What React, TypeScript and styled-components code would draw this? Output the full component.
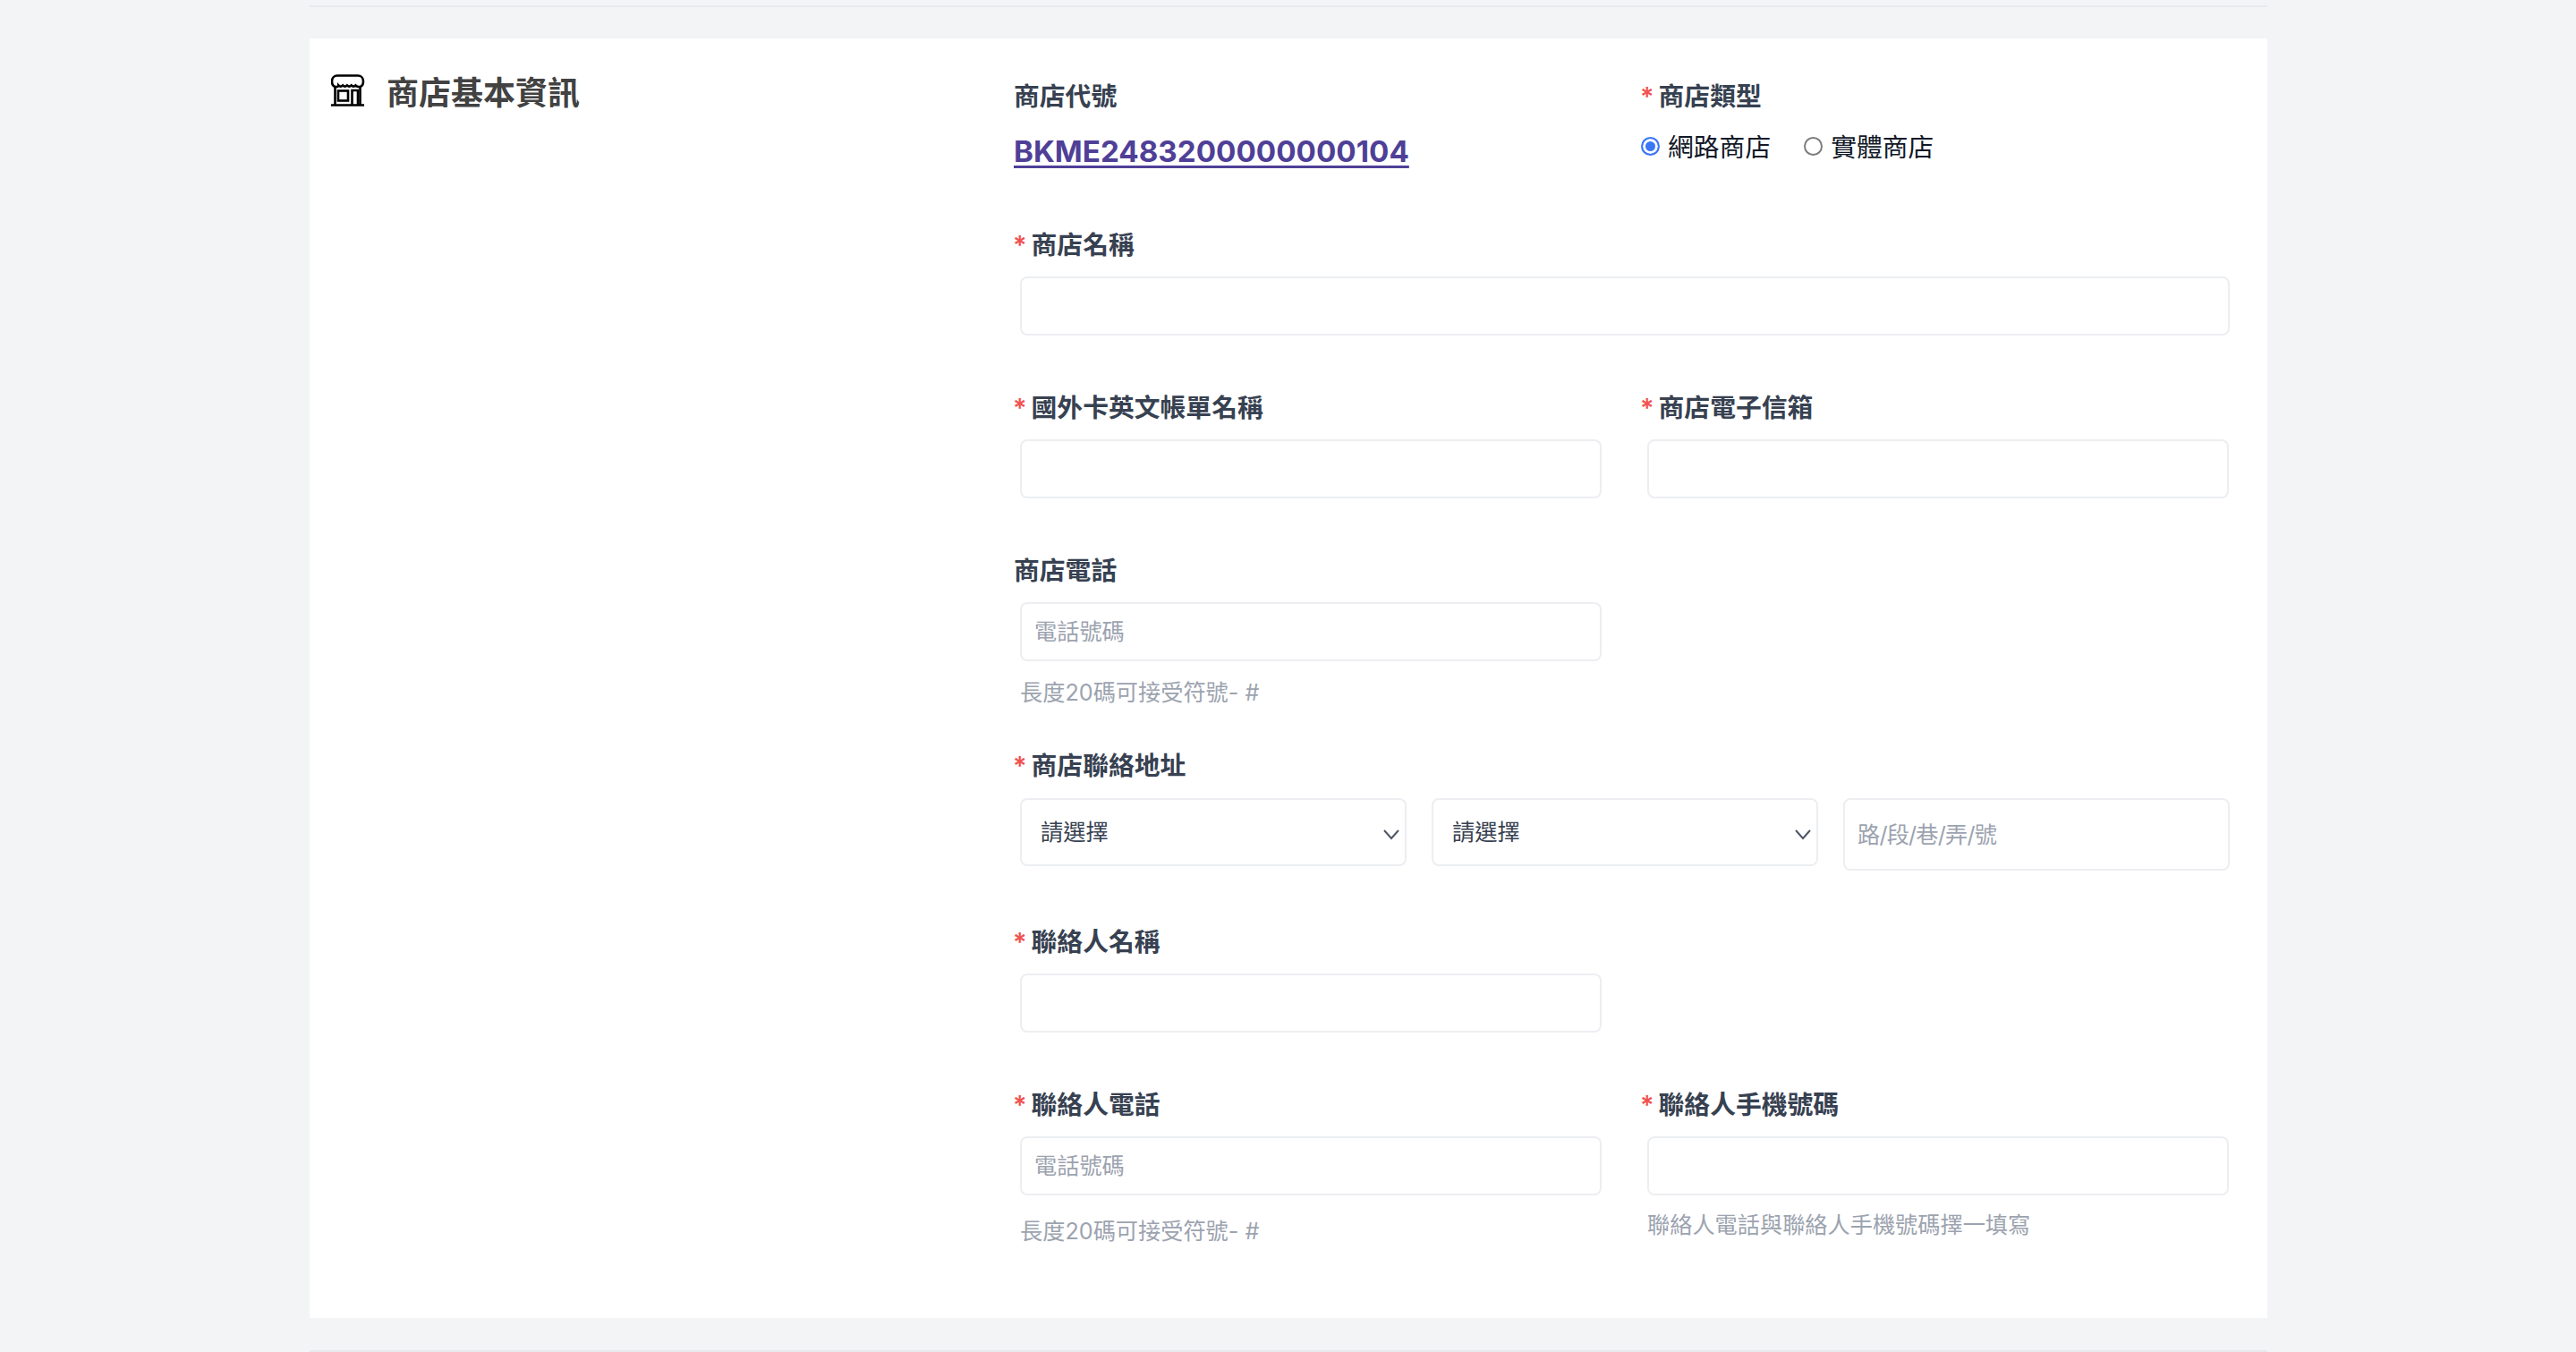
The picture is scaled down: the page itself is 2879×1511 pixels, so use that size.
import React from 'react';
import styled, { createGlobalStyle } from 'styled-components';

const GlobalStyle = createGlobalStyle`
  html, body {
    margin: 0;
    padding: 0;
    background: #f3f4f6;
  }
  body {
    font-family: Inter, "Noto Sans CJK TC", "Noto Sans", sans-serif;
    overflow: hidden;
  }
  * {
    box-sizing: border-box;
  }
`;

const Page = styled.div`
  width: 2188px;
  height: 1511px;
  margin-left: 346px;
  padding-top: 6px;
  display: flex;
  flex-direction: column;
`;

const Divider = styled.div`
  height: 2px;
  background: #e8e9ed;
`;

const Card = styled.section`
  margin-top: 35px;
  height: 1430px;
  background: #fff;
  display: grid;
  grid-template-columns: 787px 1fr;
  padding-top: 40px;
  margin-bottom: 36px;
`;

const SectionTitle = styled.div`
  display: flex;
  align-items: flex-start;
  gap: 24px;
  padding-left: 24px;
`;

const StoreIcon = styled.svg`
  width: 38px;
  height: 36px;
  flex: none;
`;

const TitleText = styled.h2`
  margin: 1px 0 0;
  font-size: 36px;
  line-height: 40px;
  font-weight: 700;
  color: #424242;
`;

const Form = styled.div`
  display: flex;
  flex-direction: column;
  padding-top: 7px;
`;

const Row = styled.div<{ $gap: number }>`
  display: grid;
  grid-template-columns: 701px 701px;
  margin-bottom: ${(p) => p.$gap}px;
`;

const Field = styled.div<{ $wide?: boolean }>`
  display: flex;
  flex-direction: column;
  grid-column: ${(p) => (p.$wide ? '1 / span 2' : 'auto')};
`;

const Label = styled.label`
  display: block;
  height: 36px;
  font-size: 28.8px;
  line-height: 36px;
  font-weight: 600;
  color: #374151;
`;

const Required = styled.span`
  color: #f05252;
  margin-right: 5px;
  margin-left: -1px;
`;

const TextInput = styled.input<{ $wide?: boolean; $h?: number }>`
  display: block;
  width: ${(p) => (p.$wide ? '1352px' : '650px')};
  height: ${(p) => p.$h ?? 66}px;
  margin: 17px 0 0 7px;
  padding: 0 14px;
  border: 2px solid #eceef1;
  border-radius: 8px;
  background: #fff;
  outline: none;
  font-family: inherit;
  font-size: 25.2px;
  color: #374151;

  &::placeholder {
    color: #9ca3af;
    opacity: 1;
  }
`;

const Help = styled.div<{ $top: number }>`
  margin: ${(p) => p.$top}px 0 0 7px;
  height: 36px;
  font-size: 25.2px;
  line-height: 36px;
  color: #9ca3af;
`;

const CodeLink = styled.a`
  display: inline-block;
  margin-top: 23px;
  font-size: 33.2px;
  line-height: 40px;
  font-weight: 700;
  color: #4f3f97;
  text-decoration: underline;
  text-decoration-thickness: 3px;
  text-underline-offset: 4px;
`;

const RadioGroup = styled.div`
  display: flex;
  align-items: center;
  margin-top: 21px;
  height: 36px;
`;

const RadioLabel = styled.label`
  display: flex;
  align-items: center;
  margin-right: 37px;
  font-size: 28.8px;
  line-height: 36px;
  color: #111827;
`;

const Radio = styled.input`
  appearance: none;
  width: 21px;
  height: 21px;
  margin: 0 9px 4px 0;
  border: 2px solid #7c7c7c;
  border-radius: 50%;
  background: #fff;

  &:checked {
    border-color: #3b76f6;
    background: #3b76f6;
    box-shadow: inset 0 0 0 3px #fff;
  }
`;

const AddressRow = styled.div`
  display: grid;
  grid-template-columns: repeat(3, 432px);
  column-gap: 28px;
  align-items: start;
  margin: 18px 0 0 7px;
`;

const SelectWrap = styled.div`
  position: relative;
`;

const Select = styled.select`
  display: block;
  width: 100%;
  height: 76px;
  padding: 0 21px;
  appearance: none;
  border: 2px solid #eceef1;
  border-radius: 8px;
  background: #fff;
  font-family: inherit;
  font-size: 25.2px;
  color: #374151;
`;

const Chevron = styled.svg`
  position: absolute;
  right: 7px;
  top: 30px;
  width: 20px;
  height: 20px;
  pointer-events: none;
`;

const AddressInput = styled(TextInput)`
  width: 100%;
  margin: 0;

  &::placeholder {
    letter-spacing: -0.8px;
  }
`;

function AddressSelect() {
  return (
    <SelectWrap>
      <Select defaultValue="">
        <option value="">請選擇</option>
      </Select>
      <Chevron viewBox="0 0 20 20" fill="none" stroke="#4b5563" strokeWidth="2">
        <path d="M2 6l8 9 8-9" />
      </Chevron>
    </SelectWrap>
  );
}

function RequiredLabel({ children }: { children: React.ReactNode }) {
  return (
    <Label>
      <Required>*</Required>
      {children}
    </Label>
  );
}

export default function App() {
  return (
    <>
      <GlobalStyle />
      <Page>
        <Divider />
        <Card>
          <SectionTitle>
            <StoreIcon viewBox="0 0 38 36" fill="none" stroke="#000" strokeWidth="2.6">
              <path d="M7 1.500h23c3.500 0 6 2.600 6 6.500 0 3.200-1.600 5.500-4 6-1.600.3-3-.3-4.500-1.600-1.500 1.600-3.300 1.600-4.800 0-1.500 1.600-3.300 1.600-4.800 0-1.500 1.600-3.300 1.600-4.800 0-1.500 1.600-3.300 1.600-4.800 0C8.300 13.700 6.600 14.300 5 14c-2.400-.5-4-2.800-4-6 0-3.900 2.500-6.500 6-6.500z" />
              <path d="M4.500 14v20M32.500 14v20M0 34.500h37" />
              <rect x="8" y="18.500" width="11" height="11" />
              <path d="M23.500 34V18h6.500v16" />
            </StoreIcon>
            <TitleText>商店基本資訊</TitleText>
          </SectionTitle>
          <Form>
            <Row $gap={67}>
              <Field>
                <Label>商店代號</Label>
                <div>
                  <CodeLink href="#">BKME2483200000000104</CodeLink>
                </div>
              </Field>
              <Field>
                <RequiredLabel>商店類型</RequiredLabel>
                <RadioGroup>
                  <RadioLabel>
                    <Radio type="radio" name="storeType" defaultChecked />
                    網路商店
                  </RadioLabel>
                  <RadioLabel>
                    <Radio type="radio" name="storeType" />
                    實體商店
                  </RadioLabel>
                </RadioGroup>
              </Field>
            </Row>
            <Row $gap={63}>
              <Field $wide>
                <RequiredLabel>商店名稱</RequiredLabel>
                <TextInput $wide />
              </Field>
            </Row>
            <Row $gap={63}>
              <Field>
                <RequiredLabel>國外卡英文帳單名稱</RequiredLabel>
                <TextInput />
              </Field>
              <Field>
                <RequiredLabel>商店電子信箱</RequiredLabel>
                <TextInput />
              </Field>
            </Row>
            <Row $gap={46}>
              <Field>
                <Label>商店電話</Label>
                <TextInput placeholder="電話號碼" />
                <Help $top={17}>長度20碼可接受符號- #</Help>
              </Field>
            </Row>
            <Row $gap={62}>
              <Field $wide>
                <RequiredLabel>商店聯絡地址</RequiredLabel>
                <AddressRow>
                  <AddressSelect />
                  <AddressSelect />
                  <AddressInput $h={81} placeholder="路/段/巷/弄/號" />
                </AddressRow>
              </Field>
            </Row>
            <Row $gap={63}>
              <Field>
                <RequiredLabel>聯絡人名稱</RequiredLabel>
                <TextInput />
              </Field>
            </Row>
            <Row $gap={0}>
              <Field>
                <RequiredLabel>聯絡人電話</RequiredLabel>
                <TextInput placeholder="電話號碼" />
                <Help $top={22}>長度20碼可接受符號- #</Help>
              </Field>
              <Field>
                <RequiredLabel>聯絡人手機號碼</RequiredLabel>
                <TextInput />
                <Help $top={15}>聯絡人電話與聯絡人手機號碼擇一填寫</Help>
              </Field>
            </Row>
          </Form>
        </Card>
        <Divider />
      </Page>
    </>
  );
}
